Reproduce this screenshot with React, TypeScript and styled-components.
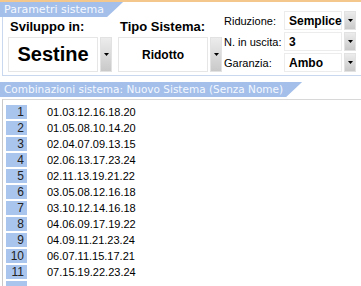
import React, { FC } from 'react'
import styled, { createGlobalStyle } from 'styled-components'

const GlobalStyle = createGlobalStyle`
  html, body {
    margin: 0;
    padding: 0;
    background: #ffffff;
    overflow: hidden;
  }
  #root {
    width: 361px;
    height: 286px;
    overflow: hidden;
  }
`

const combinations = [
  '01.03.12.16.18.20',
  '01.05.08.10.14.20',
  '02.04.07.09.13.15',
  '02.06.13.17.23.24',
  '02.11.13.19.21.22',
  '03.05.08.12.16.18',
  '03.10.12.14.16.18',
  '04.06.09.17.19.22',
  '04.09.11.21.23.24',
  '06.07.11.15.17.21',
  '07.15.19.22.23.24',
]

const Arrow: FC = () => (
  <svg width="5" height="3" viewBox="0 0 5 3">
    <path d="M0 0h5L2.5 3z" fill="#000" />
  </svg>
)

interface SelectProps {
  value: string
  big?: boolean
}

const BigSelect: FC<SelectProps> = ({ value, big }) => (
  <BigSelectWrap>
    <BigBox $big={big}>{value}</BigBox>
    <DropButton>
      <Arrow />
    </DropButton>
  </BigSelectWrap>
)

const SmallSelect: FC<{ value: string }> = ({ value }) => (
  <SmallSelectWrap>
    <SmallBox>{value}</SmallBox>
    <DropButton>
      <Arrow />
    </DropButton>
  </SmallSelectWrap>
)

const App: FC = () => {
  return (
    <Page>
      <GlobalStyle />
      <TopStrip />
      <Panel>
        <LeftPart>
          <Tab $size={11}>Parametri sistema</Tab>
          <Groups>
            <Group $width={104}>
              <GroupLabel>Sviluppo in:</GroupLabel>
              <BigSelect value="Sestine" big />
            </Group>
            <Group $width={104}>
              <GroupLabel>Tipo Sistema:</GroupLabel>
              <BigSelect value="Ridotto" />
            </Group>
          </Groups>
        </LeftPart>
        <RightPart>
          <FieldLabel>Riduzione:</FieldLabel>
          <SmallSelect value="Semplice" />
          <FieldLabel>N. in uscita:</FieldLabel>
          <SmallSelect value="3" />
          <FieldLabel>Garanzia:</FieldLabel>
          <SmallSelect value="Ambo" />
        </RightPart>
      </Panel>
      <Tab $size={10.5}>Combinazioni sistema: Nuovo Sistema (Senza Nome)</Tab>
      <List>
        {combinations.map((combo, i) => (
          <Row key={combo}>
            <NumCell>{i + 1}</NumCell>
            <ComboText>{combo}</ComboText>
          </Row>
        ))}
        <Row>
          <NumCell />
        </Row>
      </List>
    </Page>
  )
}

const Page = styled.div`
  width: 361px;
  height: 286px;
  overflow: hidden;
  font-family: 'Liberation Sans', Arial, sans-serif;
  color: #000;
`
const TopStrip = styled.div`
  height: 2px;
  background: #f4c88c;
`
const Panel = styled.div`
  display: flex;
  height: 74px;
  border-left: 1px solid #c9d8ef;
  border-bottom: 1px solid #c9d8ef;
  margin-left: 2px;
  box-sizing: border-box;
  margin-bottom: 3px;
`
const LeftPart = styled.div`
  display: flex;
  flex-direction: column;
  margin-left: -3px;
`
const Tab = styled.div<{ $size: number }>`
  display: inline-block;
  align-self: flex-start;
  height: 15px;
  line-height: 15px;
  padding: 0 19px 0 4px;
  background: #a3bfea;
  color: #f4f8ff;
  font-family: 'DejaVu Sans', Verdana, sans-serif;
  font-size: ${(p) => p.$size}px;
  white-space: nowrap;
  clip-path: polygon(0 0, 100% 0, calc(100% - 16px) 100%, 0 100%);
`
const Groups = styled.div`
  display: flex;
  gap: 6px;
  padding-left: 8px;
`
const Group = styled.div<{ $width: number }>`
  display: flex;
  flex-direction: column;
  width: ${(p) => p.$width}px;
`
const GroupLabel = styled.div`
  font-weight: bold;
  font-size: 13px;
  line-height: 15px;
  height: 18px;
  padding: 2px 0 0 2px;
`
const BigSelectWrap = styled.div`
  display: flex;
  height: 35px;
  gap: 2px;
`
const BigBox = styled.div<{ $big?: boolean }>`
  flex: 1;
  display: flex;
  align-items: center;
  justify-content: center;
  border: 1px solid #e6e6e6;
  font-weight: bold;
  font-size: ${(p) => (p.$big ? '20px' : '12px')};
`
const DropButton = styled.div`
  width: 12px;
  display: flex;
  align-items: center;
  justify-content: center;
  background: linear-gradient(to bottom, #ececec, #c9c9c9);
  border: 1px solid #e2e2e2;
  box-sizing: border-box;
`
const RightPart = styled.div`
  display: grid;
  grid-template-columns: 60px auto;
  grid-auto-rows: 19px;
  row-gap: 2px;
  padding: 9px 0 0 2px;
`
const FieldLabel = styled.div`
  font-size: 11px;
  display: flex;
  align-items: center;
`
const SmallSelectWrap = styled.div`
  display: flex;
  gap: 2px;
`
const SmallBox = styled.div`
  width: 58px;
  display: flex;
  align-items: center;
  padding-left: 4px;
  box-sizing: border-box;
  border: 1px solid #ececec;
  font-weight: bold;
  font-size: 12px;
`
const List = styled.div`
  margin-left: 2px;
  margin-top: 2px;
  border-left: 1px solid #c8c8c8;
  border-top: 1px solid #d8d8d8;
  padding: 5px 0 0 3px;
`
const Row = styled.div`
  display: flex;
  align-items: center;
  height: 14px;
  margin-bottom: 2px;
`
const NumCell = styled.div`
  width: 21px;
  height: 14px;
  line-height: 14px;
  box-sizing: border-box;
  padding-right: 3px;
  text-align: right;
  background: #a9c5ee;
  font-size: 12px;
  color: #222;
`
const ComboText = styled.div`
  margin-left: 20px;
  font-size: 11px;
`

export default App
